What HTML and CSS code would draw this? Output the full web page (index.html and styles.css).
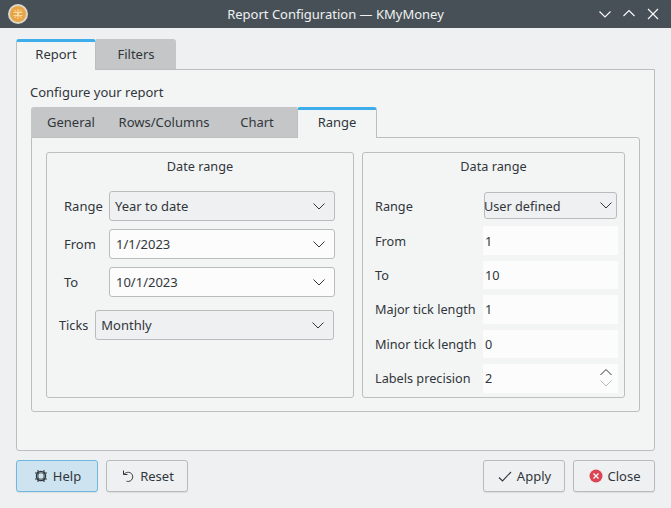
FILE: index.html
```html
<!DOCTYPE html>
<html lang="en">
<head>
  <meta charset="UTF-8">
  <title>Report Configuration — KMyMoney</title>
  <link rel="stylesheet" href="styles.css">
</head>
<body>
  <div class="window">
    <header class="titlebar">
      <svg class="app-icon" width="20" height="20" viewBox="0 0 20 20">
        <circle cx="10" cy="10" r="10" fill="#dcd8cc"/>
        <circle cx="10" cy="10" r="8" fill="#e9a544"/>
        <path d="M10 5v10M5.500 8.500h9M5.500 11.500h9M6.500 6l3.500 4 3.500-4M6.500 14l3.500-4 3.500 4" stroke="#f8dca8" stroke-width="1" fill="none"/>
      </svg>
      <span class="title">Report Configuration — KMyMoney</span>
      <div class="win-buttons">
        <svg width="12" height="12" viewBox="0 0 12 12"><path d="M0.500 3.500L6 9l5.500-5.500" class="win-stroke"/></svg>
        <svg width="12" height="12" viewBox="0 0 12 12"><path d="M0.500 8L6 2.500 11.500 8" class="win-stroke"/></svg>
        <svg width="12" height="12" viewBox="0 0 12 12"><path d="M1 1l10 10M11 1L1 11" class="win-stroke"/></svg>
      </div>
    </header>

    <main class="content">
      <div class="tabs outer-tabs">
        <div class="tab active">Report</div>
        <div class="tab tab-filters">Filters</div>
      </div>
      <section class="pane outer-pane">
        <div class="caption">Configure your report</div>
        <div class="tabs inner-tabs">
          <div class="tab tab-general">General</div>
          <div class="tab tab-rows">Rows/Columns</div>
          <div class="tab tab-chart">Chart</div>
          <div class="tab active tab-range">Range</div>
        </div>
        <div class="pane inner-pane">
          <fieldset class="group date-group">
            <div class="group-title">Date range</div>
            <div class="date-rows">
              <div class="row">
                <span class="row-label">Range</span>
                <div class="combo">Year to date<svg class="chevron" width="12" height="7" viewBox="0 0 12 7"><path d="M0.500 0.500L6 6l5.500-5.500"/></svg></div>
              </div>
              <div class="row">
                <span class="row-label">From</span>
                <div class="combo editable">1/1/2023<svg class="chevron" width="12" height="7" viewBox="0 0 12 7"><path d="M0.500 0.500L6 6l5.500-5.500"/></svg></div>
              </div>
              <div class="row">
                <span class="row-label">To</span>
                <div class="combo editable">10/1/2023<svg class="chevron" width="12" height="7" viewBox="0 0 12 7"><path d="M0.500 0.500L6 6l5.500-5.500"/></svg></div>
              </div>
            </div>
            <div class="row ticks-row">
              <span class="ticks-label">Ticks</span>
              <div class="combo">Monthly<svg class="chevron" width="12" height="7" viewBox="0 0 12 7"><path d="M0.500 0.500L6 6l5.500-5.500"/></svg></div>
            </div>
          </fieldset>

          <fieldset class="group data-group">
            <div class="group-title">Data range</div>
            <div class="data-rows">
              <span>Range</span>
              <div class="combo small-combo">User defined<svg class="chevron" width="12" height="7" viewBox="0 0 12 7"><path d="M0.500 0.500L6 6l5.500-5.500"/></svg></div>
              <span>From</span>
              <div class="field">1</div>
              <span>To</span>
              <div class="field">10</div>
              <span class="raised">Major tick length</span>
              <div class="field raised">1</div>
              <span>Minor tick length</span>
              <div class="field">0</div>
              <span class="raised">Labels precision</span>
              <div class="field spin raised">2
                <div class="spin-arrows">
                  <svg width="12" height="7" viewBox="0 0 12 7"><path d="M0.500 6L6 0.500 11.500 6" stroke="#31363b" fill="none"/></svg>
                  <svg width="12" height="7" viewBox="0 0 12 7"><path d="M0.500 0.500L6 6l5.500-5.500" stroke="#b9bcbe" fill="none"/></svg>
                </div>
              </div>
            </div>
          </fieldset>
        </div>
      </section>

      <footer class="buttons">
        <button class="btn btn-help">
          <svg width="16" height="16" viewBox="0 0 16 16">
            <circle cx="8" cy="8" r="4.600" fill="none" stroke="#31363b" stroke-width="1.300"/>
            <path d="M2 5h12M2 11h12M5 2v12M11 2v12" stroke="#31363b" stroke-width="1.100" fill="none"/>
            <circle cx="8" cy="8" r="2.400" fill="#cde4f0"/>
          </svg>
          Help
        </button>
        <button class="btn">
          <svg width="16" height="16" viewBox="0 0 16 16">
            <path d="M3.500 2.500v4h4M3.800 6.300C6 3.900 9.300 3.700 11.300 5.500c2 2 1.800 5.300-.4 7-1.300 1-3 1.200-4.400.7" stroke="#31363b" fill="none"/>
          </svg>
          Reset
        </button>
        <div class="spacer"></div>
        <button class="btn">
          <svg width="16" height="16" viewBox="0 0 16 16"><path d="M2 9.500l3.500 3.500 8.500-9" stroke="#31363b" stroke-width="1.100" fill="none"/></svg>
          Apply
        </button>
        <button class="btn">
          <svg width="16" height="16" viewBox="0 0 16 16">
            <circle cx="8" cy="8" r="6.500" fill="#da4453"/>
            <path d="M5.500 5.500l5 5M10.500 5.500l-5 5" stroke="#fff" stroke-width="1.300"/>
          </svg>
          Close
        </button>
      </footer>
    </main>
  </div>
</body>
</html>
```

FILE: styles.css
```css
html, body {
  margin: 0;
  padding: 0;
}

body {
  font-family: 'Noto Sans', sans-serif;
  font-size: 13px;
  line-height: 18px;
  color: #31363b;
  background: #eff0f1;
}

.window {
  width: 671px;
  height: 508px;
  display: flex;
  flex-direction: column;
  overflow: hidden;
}

.titlebar {
  height: 28px;
  flex: none;
  position: relative;
  display: flex;
  align-items: center;
  justify-content: center;
  background: #475057;
  color: #eff0f1;
}

.app-icon {
  position: absolute;
  left: 8px;
  top: 4px;
}

.win-buttons {
  position: absolute;
  right: 12px;
  top: 8px;
  display: flex;
  gap: 12px;
}

.win-stroke {
  stroke: #fcfcfc;
  stroke-width: 1.1;
  fill: none;
}

.content {
  flex: 1;
  display: flex;
  flex-direction: column;
  padding: 11px 16px 16px;
}

.tabs {
  display: flex;
  height: 30px;
  flex: none;
}

.tab {
  display: flex;
  align-items: center;
  justify-content: center;
  background: #c4c6c8;
  box-sizing: border-box;
}

.tab.active {
  background: #f3f5f5;
  border: 1px solid #bcbebf;
  border-top: 3px solid #3daee9;
  border-bottom: none;
  border-radius: 3px 3px 0 0;
  position: relative;
  z-index: 1;
  height: 31px;
  padding-bottom: 5px;
}

.outer-tabs .active {
  width: 80px;
}

.tab-filters {
  width: 80px;
  border-radius: 0 3px 0 0;
}

.pane {
  background: #f3f5f5;
  border: 1px solid #bcbebf;
  box-sizing: border-box;
}

.outer-pane {
  height: 382px;
  border-radius: 0 0 3px 3px;
  padding: 12px 14px 0;
}

.caption {
  height: 25px;
  line-height: 21px;
  margin-left: -1px;
}

.inner-tabs {
  width: 346px;
}

.inner-tabs .tab:first-child {
  border-radius: 3px 0 0 0;
}

.tab-general {
  width: 80px;
}

.tab-rows {
  width: 106px;
}

.tab-chart {
  width: 80px;
}

.inner-tabs .tab-range {
  width: 80px;
}

.inner-pane {
  height: 275px;
  border-radius: 0 3px 3px 3px;
  padding: 14px 14px 0;
  display: flex;
  gap: 8px;
}

.group {
  margin: 0;
  padding: 0;
  height: 246px;
  box-sizing: border-box;
  border: 1px solid #bcbebf;
  border-radius: 3px;
}

.date-group {
  width: 308px;
}

.data-group {
  width: 263px;
}

.group-title {
  text-align: center;
  height: 27px;
  line-height: 27px;
  font-size: 12.7px;
}

.date-rows {
  display: flex;
  flex-direction: column;
  gap: 8px;
  margin: 11px 18px 0 17px;
}

.row {
  display: flex;
  align-items: center;
  gap: 7px;
}

.row-label {
  width: 38px;
  flex: none;
}

.ticks-row {
  margin: 13px 19px 0 12px;
}

.ticks-label {
  flex: none;
  font-size: 12.7px;
}

.combo {
  flex: 1;
  height: 30px;
  box-sizing: border-box;
  display: flex;
  align-items: center;
  justify-content: space-between;
  padding: 0 9px 0 5px;
  background: #eff0f1;
  border: 1px solid #b9bbbd;
  border-radius: 3px;
}

.combo.editable {
  background: #fcfcfc;
  padding-left: 6px;
}

.chevron path {
  stroke: #31363b;
  fill: none;
}

.data-rows {
  display: grid;
  grid-template-columns: 108px 135px;
  grid-template-rows: 29.5px repeat(5, 29px);
  row-gap: 5.5px;
  align-items: center;
  margin: 11px 0 0 12px;
  font-size: 12.7px;
}

.small-combo {
  height: 27px;
  margin-left: 1px;
  margin-right: 1px;
  padding: 0 4px 0 0;
  text-indent: -1px;
}

.field {
  height: 28.5px;
  box-sizing: border-box;
  display: flex;
  align-items: center;
  padding-left: 2px;
  background: #fcfcfc;
  position: relative;
}

.raised {
  padding-bottom: 2px;
}

.spin-arrows {
  position: absolute;
  right: 6px;
  top: 5px;
  display: flex;
  flex-direction: column;
  gap: 4px;
}

.spin-arrows svg {
  display: block;
}

.buttons {
  display: flex;
  gap: 8px;
  margin-top: 9px;
}

.spacer {
  flex: 1;
}

.btn {
  width: 82px;
  height: 32px;
  box-sizing: border-box;
  display: flex;
  align-items: center;
  justify-content: center;
  gap: 4px;
  padding: 0;
  font: inherit;
  color: inherit;
  background: #eff0f1;
  border: 1px solid #b9bbbd;
  border-radius: 3px;
  box-shadow: 0 1px 1px rgba(0, 0, 0, 0.08);
}

.btn-help {
  background: #cde4f0;
  border-color: #6fb8df;
}
```
